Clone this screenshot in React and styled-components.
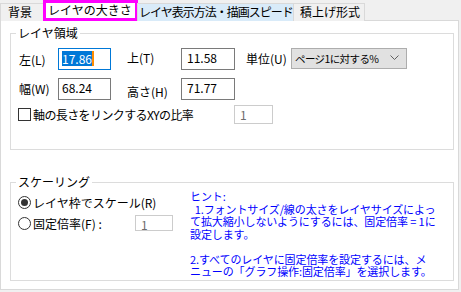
import React from 'react';
import styled, { createGlobalStyle } from 'styled-components';

const Global = createGlobalStyle`
  html, body {
    margin: 0;
    padding: 0;
    background: #f0f0f0;
  }
  body {
    font-family: "Noto Sans CJK JP", "Noto Sans", sans-serif;
    font-size: 12px;
    color: #000;
  }
`;

const Window = styled.div`
  width: 461px;
  height: 292px;
  background: #f0f0f0;
  display: flex;
  flex-direction: column;
  overflow: hidden;
`;

const TabBar = styled.div`
  display: flex;
  align-items: flex-end;
  height: 21px;
  position: relative;
  z-index: 1;
`;

const Tab = styled.div`
  box-sizing: border-box;
  height: ${(p) => (p.$active ? '21px' : '18px')};
  width: ${(p) => p.$w}px;
  background: ${(p) => (p.$active ? '#fff' : p.$hover ? '#d9ebf9' : '#f0f0f0')};
  border: ${(p) => (p.$active ? '3px solid #ff00ff' : '1px solid #d9d9d9')};
  border-bottom: ${(p) => (p.$active ? '3px solid #ff00ff' : 'none')};
  margin-left: ${(p) => (p.$first ? '0' : '-1px')};
  padding-left: ${(p) => p.$pad}px;
  line-height: ${(p) => (p.$active ? '14px' : '16px')};
  letter-spacing: ${(p) => p.$ls || 0}px;
  white-space: nowrap;
`;

const Panel = styled.div`
  box-sizing: border-box;
  margin-top: -1px;
  width: 459px;
  height: 270px;
  background: #fff;
  border: 1px solid #d9d9d9;
  padding: 5px 0 0 9px;
  display: flex;
  flex-direction: column;
  gap: 25px;
`;

const Group = styled.fieldset`
  box-sizing: border-box;
  margin: 0;
  padding: 0;
  width: 444px;
  height: ${(p) => p.$h}px;
  border: 1px solid #dcdcdc;
  min-width: 0;
`;

const Legend = styled.legend`
  margin-left: 5px;
  padding: 0 2px;
  font-size: 12px;
  line-height: 14px;
`;

const FieldGrid = styled.div`
  display: grid;
  grid-template-columns: 39px 53px 70px 54px 56px 116px;
  grid-auto-rows: 22px;
  row-gap: 8px;
  padding: 8px 0 0 8px;
  align-items: center;
`;

const Label = styled.span`
  padding-left: ${(p) => p.$pl || 0}px;
  white-space: nowrap;
  line-height: 14px;
  margin-top: ${(p) => p.$mt || 0}px;
`;

const TextBox = styled.div`
  box-sizing: border-box;
  width: ${(p) => p.$w || 53}px;
  height: ${(p) => p.$h || 22}px;
  border: 1px solid ${(p) => (p.$focus ? '#0078d7' : p.$disabled ? '#cccccc' : '#7a7a7a')};
  color: ${(p) => (p.$disabled ? '#6d6d6d' : '#000')};
  padding: 2px 0 0 ${(p) => p.$pl || 3}px;
  line-height: 14px;
  background: #fff;
  display: flex;
  align-items: flex-start;
`;

const Selected = styled.span`
  background: #0078d7;
  color: #fff;
  line-height: 15px;
`;

const Caret = styled.span`
  display: inline-block;
  width: 2px;
  height: 15px;
  background: #ff8c00;
`;

const Select = styled.div`
  box-sizing: border-box;
  width: 116px;
  height: 21px;
  margin-top: -2px;
  border: 1px solid #adadad;
  background: #e1e1e1;
  display: flex;
  align-items: center;
  justify-content: space-between;
  padding: 0 7px 0 3px;
  font-size: 10.5px;
  letter-spacing: -0.6px;
`;

const CheckRow = styled.div`
  display: flex;
  align-items: center;
  height: 19px;
  margin-top: 5px;
  padding-left: 7px;
`;

const Box = styled.span`
  box-sizing: border-box;
  width: 13px;
  height: 13px;
  border: 1px solid #333;
  background: #fff;
  margin-right: 2px;
  flex: none;
`;

const CheckText = styled.span`
  width: 201px;
  white-space: nowrap;
  letter-spacing: -0.6px;
`;

const ScaleBody = styled.div`
  display: grid;
  grid-template-columns: 172px 1fr;
  padding: 1px 0 0 7px;
`;

const Radios = styled.div`
  display: flex;
  flex-direction: column;
  gap: 5px;
  padding-top: 4px;
`;

const RadioRow = styled.div`
  display: flex;
  align-items: center;
  height: 16px;
`;

const Radio = styled.span`
  box-sizing: border-box;
  width: 13px;
  height: 13px;
  border-radius: 50%;
  border: 1px solid #333;
  background: #fff;
  margin-right: 2px;
  display: flex;
  align-items: center;
  justify-content: center;
  flex: none;
  &::after {
    content: '';
    width: 7px;
    height: 7px;
    border-radius: 50%;
    background: ${(p) => (p.$on ? '#333' : 'transparent')};
  }
`;

const RadioText = styled.span`
  width: ${(p) => p.$w || 'auto'};
  white-space: nowrap;
`;

const Hint = styled.div`
  color: #0000ff;
  font-size: 11px;
  line-height: 12.5px;
  white-space: pre;
  letter-spacing: -0.1px;
`;

const Chevron = () => (
  <svg width="9" height="6" viewBox="0 0 9 6">
    <path d="M0.5 0.5 L4.5 4.5 L8.5 0.5" fill="none" stroke="#606060" strokeWidth="1" />
  </svg>
);

const App = () => {
  return (
    <Window>
      <Global />
      <TabBar>
        <Tab $first $w={44} $pad={7}>背景</Tab>
        <Tab $active $w={95} $pad={2}>レイヤの大きさ</Tab>
        <Tab $hover $w={157} $pad={1} $ls={-1}>レイヤ表示方法・描画スピード</Tab>
        <Tab $w={72} $pad={6}>積上げ形式</Tab>
      </TabBar>
      <Panel>
        <Group $h={124}>
          <Legend>レイヤ領域</Legend>
          <FieldGrid>
            <Label $mt={2}>左(L)</Label>
            <TextBox $focus>
              <Selected>17.86</Selected>
              <Caret />
            </TextBox>
            <Label $pl={16} $mt={-2}>上(T)</Label>
            <TextBox $w={54} $pl={5}>11.58</TextBox>
            <Label $pl={11}>単位(U)</Label>
            <Select>
              <span>ページ1に対する%</span>
              <Chevron />
            </Select>
            <Label>幅(W)</Label>
            <TextBox>68.24</TextBox>
            <Label $pl={16} $mt={6}>高さ(H)</Label>
            <TextBox $w={54} $pl={5}>71.77</TextBox>
          </FieldGrid>
          <CheckRow>
            <Box />
            <CheckText>軸の長さをリンクするXYの比率</CheckText>
            <TextBox $w={39} $h={19} $disabled $pl={5}>1</TextBox>
          </CheckRow>
        </Group>
        <Group $h={106}>
          <Legend>スケーリング</Legend>
          <ScaleBody>
            <Radios>
              <RadioRow>
                <Radio $on />
                <RadioText>レイヤ枠でスケール(R)</RadioText>
              </RadioRow>
              <RadioRow>
                <Radio />
                <RadioText $w="102px">固定倍率(F) :</RadioText>
                <TextBox $w={38} $h={16} $disabled $pl={5}>1</TextBox>
              </RadioRow>
            </Radios>
            <Hint>{`ヒント:
  1.フォントサイズ/線の太さをレイヤサイズによっ
て拡大縮小しないようにするには、固定倍率 = 1に
設定します。

2.すべてのレイヤに固定倍率を設定するには、メ
ニューの「グラフ操作:固定倍率」を選択します。`}</Hint>
          </ScaleBody>
        </Group>
      </Panel>
    </Window>
  );
};

export default App;
